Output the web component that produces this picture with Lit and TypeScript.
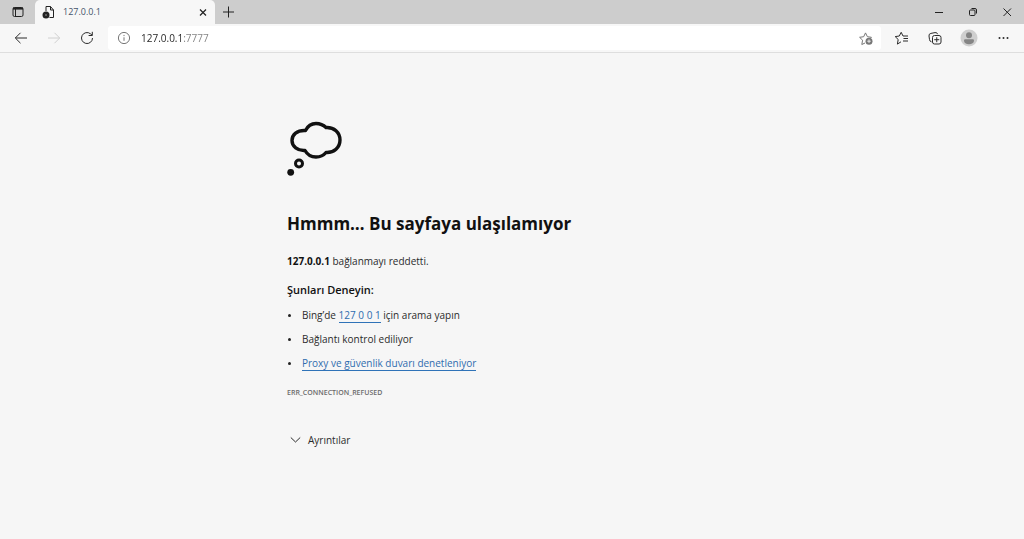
import { LitElement, html, css, svg } from "lit";
import { customElement } from "lit/decorators.js";

const icons = {
  tabActions: svg`<rect x="3" y="3.500" width="10" height="9" rx="1.500" /><path d="M3 4.500h10" stroke-width="2.200" /><path d="M5.500 5v7" />`,
  page: svg`<path d="M6 7V2.500h4.500l3 3.500v7.500h-4M10.500 2.500V6h3" /><circle cx="6" cy="11" r="3.500" fill="currentColor" stroke="none" /><path d="M4.900 9.900l2.200 2.200M7.100 9.900l-2.200 2.200" stroke="#777" stroke-width=".7" />`,
  closeTab: svg`<path d="M5 5.500l6 6M11 5.500l-6 6" stroke-width="1.200" />`,
  plus: svg`<path d="M7.500 2.500v11M2 8h11" />`,
  minimize: svg`<path d="M4 8.500h8" />`,
  restore: svg`<rect x="4.500" y="6" width="5.500" height="5.500" rx="1" /><path d="M6.500 4.500h3.500a1.500 1.500 0 0 1 1.500 1.500v3.500" />`,
  closeWindow: svg`<path d="M4.500 4.500l7.500 7.500M12 4.500L4.500 12" />`,
  back: svg`<path d="M14 8H2.500M7.500 2.800L2.300 8l5.200 5.200" />`,
  forward: svg`<path d="M2 8h11.500M8.500 2.800L13.700 8l-5.200 5.200" />`,
  reload: svg`<path d="M13.500 8a5.500 5.500 0 1 1-2-4.200l1.600 1.400M13.300 1.800v3.700H9.600" />`,
  info: svg`<circle cx="8" cy="8" r="5.600" /><path d="M8 7.300v3.500M8 4.900v1.200" />`,
  starAdd: svg`<path d="M7 13l-3.200 1.500.8-4.300-3-2.900 4.100-.6L7.500 2.900l1.900 3.800 4 .6-.8.900" stroke-linejoin="round" /><circle cx="11" cy="11.200" r="3.500" fill="currentColor" stroke="none" /><path d="M9.200 11.200h3.600M11 9.400V13" stroke="#fff" stroke-width=".8" />`,
  favorites: svg`<path d="M8 11.800l-3.600 2.300.8-4.600L2.200 6.600l4.100-.6 1.900-3.700L10 6h5M10.500 8.500H15M10 11h5" stroke-linejoin="round" />`,
  collections: svg`<path d="M4.500 11.800a2.400 2.400 0 0 1-2-2.200L2 6a2.300 2.300 0 0 1 1.900-2.600L8 2.600a2.200 2.200 0 0 1 2.600 1.600" /><rect x="5.500" y="5.500" width="8.500" height="8.500" rx="2" /><path d="M9.750 7.200v5M7.250 9.700h5" />`,
  more: svg`<g fill="currentColor" stroke="none"><circle cx="4.500" cy="8" r="1" /><circle cx="8.500" cy="8" r="1" /><circle cx="12.500" cy="8" r="1" /></g>`,
  chevron: svg`<path d="M3.800 5.500l4.700 4.500 4.700-4.500" />`,
};

const icon = (name: keyof typeof icons) =>
  html`<svg class="icon" viewBox="0 0 16 16" aria-hidden="true">${icons[name]}</svg>`;

@customElement("app-root")
export class AppRoot extends LitElement {
  static styles = css`
    :host {
      display: flex;
      flex-direction: column;
      min-height: 100vh;
      background: #f6f6f6;
      color: #2b2b2b;
      font: 10px/16px "Open Sans", "Noto Sans", sans-serif;
    }
    button {
      display: inline-flex;
      align-items: center;
      justify-content: center;
      padding: 0;
      border: 0;
      background: none;
      color: inherit;
      font: inherit;
    }
    .icon {
      width: 16px;
      height: 16px;
      flex: none;
      fill: none;
      stroke: currentColor;
      stroke-width: 1;
    }
    .strip {
      display: flex;
      height: 24px;
      background: #cdcdcd;
      color: #222;
    }
    .actions {
      width: 35px;
    }
    .tab {
      display: flex;
      align-items: center;
      gap: 7px;
      width: 180px;
      padding: 0 4px 0 5px;
      box-sizing: border-box;
      border-radius: 5px 5px 0 0;
      background: #f7f7f7;
    }
    .tab-title {
      flex: 1;
      color: #44546a;
      font-size: 9px;
    }
    .new-tab {
      width: 27px;
    }
    .window {
      display: flex;
      margin-left: auto;
    }
    .window button {
      width: 34px;
    }
    .toolbar {
      display: flex;
      align-items: center;
      height: 28px;
      padding: 0 4px;
      border-bottom: 1px solid #dedede;
      background: #f7f7f7;
    }
    .toolbar > button {
      width: 34px;
      height: 24px;
    }
    .toolbar > .nav {
      width: 33px;
    }
    .toolbar > .nav:disabled {
      color: #d0d0d0;
    }
    .address {
      display: flex;
      flex: 1;
      align-items: center;
      gap: 9px;
      height: 24px;
      margin: 0 3px 0 5px;
      padding: 0 7px 0 8px;
      border-radius: 3px;
      background: #fff;
      color: #777;
    }
    .address input {
      flex: 1;
      min-width: 0;
      padding: 0;
      border: 0;
      outline: 0;
      background: linear-gradient(90deg, #222 41px, #808080 41px);
      background-clip: text;
      -webkit-background-clip: text;
      color: transparent;
      font: inherit;
    }
    .avatar {
      width: 18px;
      height: 18px;
    }
    main {
      width: 450px;
      max-width: calc(100% - 32px);
      margin: 0 auto;
      padding: 67px 0 32px;
    }
    .cloud {
      display: block;
      width: 58px;
      height: 58px;
    }
    h1 {
      margin: 34px 0 0;
      color: #111;
      font-size: 17px;
      font-weight: 700;
      line-height: 24px;
    }
    p {
      margin: 17px 0 0;
    }
    strong {
      color: #111;
    }
    h2 {
      margin: 12px 0 0;
      color: #111;
      font-size: 11px;
      font-weight: 600;
      line-height: 18px;
    }
    ul {
      display: grid;
      gap: 8px;
      margin: 8px 0 0;
      padding: 0;
      list-style: none;
    }
    li {
      display: flex;
    }
    li::before {
      content: "";
      flex: none;
      width: 3px;
      height: 3px;
      margin: 7px 11px 0 1px;
      border-radius: 50%;
      background: #222;
    }
    a {
      border-bottom: 1px solid #2f73b8;
      color: #2f6cae;
      text-decoration: none;
    }
    .code {
      margin-top: 14px;
      color: #6b6b6b;
      font-size: 7px;
      font-weight: 600;
    }
    .details {
      gap: 5px;
      margin-top: 31px;
    }
  `;

  render() {
    return html`
      <header>
        <div class="strip">
          <button class="actions" aria-label="Sekme eylemleri">${icon("tabActions")}</button>
          <div class="tab">
            ${icon("page")}
            <span class="tab-title">127.0.0.1</span>
            <button aria-label="Sekmeyi kapat">${icon("closeTab")}</button>
          </div>
          <button class="new-tab" aria-label="Yeni sekme">${icon("plus")}</button>
          <div class="window">
            <button aria-label="Simge durumuna küçült">${icon("minimize")}</button>
            <button aria-label="Geri yükle">${icon("restore")}</button>
            <button aria-label="Kapat">${icon("closeWindow")}</button>
          </div>
        </div>
        <div class="toolbar">
          <button class="nav" aria-label="Geri">${icon("back")}</button>
          <button class="nav" aria-label="İleri" disabled>${icon("forward")}</button>
          <button class="nav" aria-label="Yenile">${icon("reload")}</button>
          <div class="address">
            ${icon("info")}
            <input type="text" aria-label="Adres çubuğu" value="127.0.0.1:7777" />
            <button aria-label="Sık kullanılanlara ekle">${icon("starAdd")}</button>
          </div>
          <button aria-label="Sık kullanılanlar">${icon("favorites")}</button>
          <button aria-label="Koleksiyonlar">${icon("collections")}</button>
          <button aria-label="Profil">
            <svg class="avatar" viewBox="0 0 18 18" aria-hidden="true">
              <circle cx="9" cy="9" r="8.500" fill="#cfcfcf" />
              <circle cx="9" cy="6.300" r="3" fill="#858585" />
              <path d="M4 11.500q0-1.200 1.200-1.200h7.600q1.200 0 1.200 1.200c0 2.500-2.200 3.700-5 3.700s-5-1.200-5-3.700z" fill="#858585" />
            </svg>
          </button>
          <button aria-label="Ayarlar ve daha fazlası">${icon("more")}</button>
        </div>
      </header>
      <main>
        <svg class="cloud" viewBox="0 0 58 58" aria-hidden="true">
          <path
            d="M18.500 10.500C21 5.500 24.500 3.500 29 3.500s8 2 10 4c8-.5 14 5 14 12.500s-6 13-14 12.500c-2.500 3-6 4.500-10 4.500s-8.500-2-11-6.500C10.500 31 5 26.500 5 20.500s5-10.500 13.500-10z"
            fill="none" stroke="#111" stroke-width="3.400" stroke-linejoin="round" />
          <circle cx="12" cy="43.500" r="3.500" fill="none" stroke="#111" stroke-width="3" />
          <circle cx="3.700" cy="52.300" r="3.400" fill="#111" />
        </svg>
        <h1>Hmmm… Bu sayfaya ulaşılamıyor</h1>
        <p><strong>127.0.0.1</strong> bağlanmayı reddetti.</p>
        <h2>Şunları Deneyin:</h2>
        <ul>
          <li><span>Bing’de <a href="#search">127 0 0 1</a> için arama yapın</span></li>
          <li><span>Bağlantı kontrol ediliyor</span></li>
          <li><span><a href="#proxy">Proxy ve güvenlik duvarı denetleniyor</a></span></li>
        </ul>
        <p class="code">ERR_CONNECTION_REFUSED</p>
        <button class="details" aria-expanded="false">${icon("chevron")}Ayrıntılar</button>
      </main>
    `;
  }
}
